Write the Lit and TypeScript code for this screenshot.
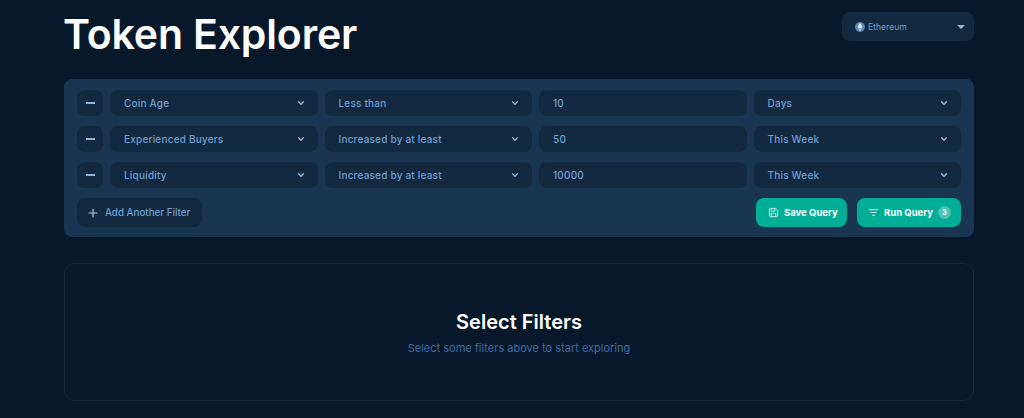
import { LitElement, html, css, svg } from "lit";
import { customElement } from "lit/decorators.js";

const chevron = svg`<path d="M2 3.5 5 6.5 8 3.5" fill="none" stroke="currentColor" stroke-width="1.7" stroke-linecap="round" stroke-linejoin="round"/>`;

const rows = [
  ["Coin Age", "Less than", "10", "Days"],
  ["Experienced Buyers", "Increased by at least", "50", "This Week"],
  ["Liquidity", "Increased by at least", "10000", "This Week"],
];

@customElement("app-root")
export class AppRoot extends LitElement {
  static styles = css`
    :host {
      display: block;
      height: 418px;
      overflow: hidden;
      background: #08182b;
      font-family: Inter, "Noto Sans", sans-serif;
      color: #fff;
    }
    .page { width: 910px; margin-left: 64px; }
    .header { display: flex; justify-content: space-between; align-items: flex-start; height: 79px; }
    h1 { margin: 11px 0 0 -1px; font-size: 41px; line-height: 46px; font-weight: 600; letter-spacing: -0.15px; }
    .chain {
      margin-top: 12px; width: 132px; height: 29px; box-sizing: border-box; padding: 0 9px 0 12px;
      display: flex; align-items: center; gap: 2px; background: #13293f; border-radius: 8px;
      font-size: 8.6px; color: #6f9fd4;
    }
    .chain span { flex: 1; }
    .caret { width: 0; height: 0; border-left: 4px solid transparent; border-right: 4px solid transparent; border-top: 4px solid #8fb6dd; }
    .panel {
      height: 158px; box-sizing: border-box; padding: 11px 13px 10px; background: #193552; border-radius: 8px;
      display: flex; flex-direction: column; gap: 10px;
    }
    .row { display: grid; grid-template-columns: 26px repeat(4, 1fr); gap: 7px; height: 26px; flex: none; }
    .control {
      background: #13293f; border-radius: 8px; display: flex; align-items: center; box-sizing: border-box;
      padding: 0 13px 0 14px; font-size: 10px; font-weight: 500; color: #6f9fd4; letter-spacing: 0.2px;
    }
    .control span { flex: 1; }
    .control svg { width: 8px; height: 8px; color: #8fb6dd; }
    .minus { padding: 0; justify-content: center; }
    .minus i { width: 9px; height: 2px; background: #8fb3d9; display: block; }
    .actions { display: flex; align-items: center; height: 29px; flex: none; }
    .btn {
      height: 29px; border-radius: 8px; display: flex; align-items: center; box-sizing: border-box;
      font-size: 9.5px; font-weight: 700;
    }
    .add { width: 125px; background: #13293f; color: #6f9fd4; padding-left: 11px; gap: 7px; font-size: 9.8px; font-weight: 500; margin-right: auto; }
    .add svg { width: 10px; height: 10px; }
    .teal { background: #00ae97; color: #fff; }
    .save { width: 91px; padding-left: 12px; gap: 5px; margin-right: 10px; }
    .run { width: 104px; padding-left: 11px; gap: 5px; }
    .teal svg { width: 11px; height: 11px; flex: none; }
    .badge {
      width: 13px; height: 13px; border-radius: 50%; background: #4cc4b3; font-size: 7.5px; font-weight: 700;
      display: flex; align-items: center; justify-content: center;
    }
    .empty {
      margin-top: 26px; height: 138px; box-sizing: border-box; border: 1px solid #12263c; border-radius: 10px;
      display: flex; flex-direction: column; align-items: center; padding-top: 46px;
    }
    h2 { margin: 0; font-size: 20px; line-height: 24px; font-weight: 600; }
    p { margin: 7px 0 0; font-size: 11px; line-height: 14px; color: #3f6ba3; }
  `;

  render() {
    return html`<div class="page">
      <div class="header">
        <h1>Token Explorer</h1>
        <div class="chain">
          <svg width="12" height="12" viewBox="0 0 12 12">
            <circle cx="6" cy="6" r="5" fill="#5b86b5"/>
            <path d="M6 1.8 8.6 6 6 7.6 3.4 6Z" fill="#dfe9f5"/>
            <path d="M6 8.3 8.4 6.8 6 10.2 3.6 6.8Z" fill="#b9cee6"/>
          </svg>
          <span>Ethereum</span><i class="caret"></i>
        </div>
      </div>
      <div class="panel">
        ${rows.map((r) => html`<div class="row">
          <div class="control minus"><i></i></div>
          <div class="control"><span>${r[0]}</span><svg viewBox="0 0 10 10">${chevron}</svg></div>
          <div class="control"><span>${r[1]}</span><svg viewBox="0 0 10 10">${chevron}</svg></div>
          <div class="control"><span>${r[2]}</span></div>
          <div class="control"><span>${r[3]}</span><svg viewBox="0 0 10 10">${chevron}</svg></div>
        </div>`)}
        <div class="actions">
          <div class="btn add">
            <svg viewBox="0 0 10 10"><path d="M5 1v8M1 5h8" stroke="#a9c7e6" stroke-width="1.2" stroke-linecap="round"/></svg>
            Add Another Filter
          </div>
          <div class="btn teal save">
            <svg viewBox="0 0 12 12" fill="none" stroke="#cdf3ec" stroke-width="1" stroke-linejoin="round">
              <path d="M1.5 2.5a1 1 0 0 1 1-1h6l2 2v6a1 1 0 0 1-1 1h-7a1 1 0 0 1-1-1z"/>
              <path d="M3.5 1.5v3h4v-3M3.5 10.5v-3.5h5v3.5"/>
            </svg>
            Save Query
          </div>
          <div class="btn teal run">
            <svg viewBox="0 0 12 12" fill="none" stroke="#cdf3ec" stroke-width="1.1" stroke-linecap="round">
              <path d="M1.5 3h9M3 6h6M5 9h2"/>
            </svg>
            Run Query <span class="badge">3</span>
          </div>
        </div>
      </div>
      <div class="empty">
        <h2>Select Filters</h2>
        <p>Select some filters above to start exploring</p>
      </div>
    </div>`;
  }
}
